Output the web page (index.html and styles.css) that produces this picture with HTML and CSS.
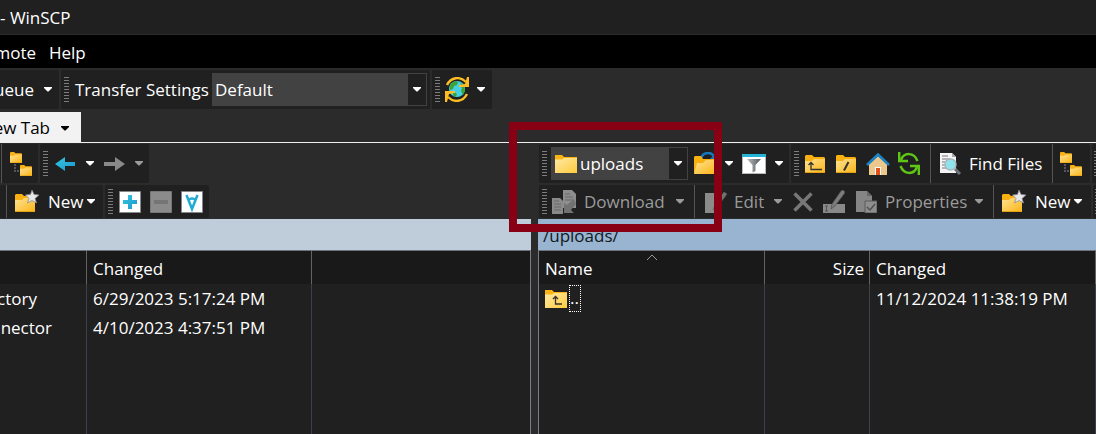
FILE: index.html
```html
<!DOCTYPE html>
<html lang="en">
<head>
<meta charset="utf-8">
<title>WinSCP</title>
<link rel="stylesheet" href="styles.css">
</head>
<body>
<svg class="defs" width="0" height="0" aria-hidden="true">
  <defs>
    <linearGradient id="gold" x1="0" y1="0" x2="1" y2="1"><stop offset="0" stop-color="#ffe394"/><stop offset="1" stop-color="#fbb415"/></linearGradient>
    <linearGradient id="pale" x1="0" y1="0" x2="1" y2="1"><stop offset="0" stop-color="#ffe9a6"/><stop offset="1" stop-color="#ffcb3c"/></linearGradient>
    <linearGradient id="cyan" x1="0" y1="0" x2="1" y2="1"><stop offset="0" stop-color="#35c9e0"/><stop offset="1" stop-color="#1b93cf"/></linearGradient>
    <linearGradient id="steel"><stop offset="0" stop-color="#b9bdc2"/><stop offset="1" stop-color="#53575c"/></linearGradient>
    <symbol id="folder" viewBox="0 0 22 18"><path d="M0 0h7l2 2h13v16H0z" fill="#fbb414"/><path d="M0 4.500h7l2-1.500h13v15H0z" fill="url(#pale)"/></symbol>
    <symbol id="folder-s" viewBox="0 0 20 18"><path d="M0 1l1-1h6l2 2h10l1 1v15H0z" fill="#f9b112"/><path d="M0 6h7l2-2h11v14H0z" fill="url(#gold)"/><path d="M0 17h20v1H0z" fill="#e3a214"/></symbol>
    <symbol id="caret" viewBox="0 0 8 5"><path d="M0 0h8v1L4.500 4.500h-1L0 1z" fill="currentColor"/></symbol>
    <symbol id="tree" viewBox="0 0 22 24"><use href="#folder-s" width="12" height="11"/><use href="#folder-s" x="10" y="13" width="12" height="11"/><path d="M4 12h2v2H4zm0 3h2v2H4zm0 3h2v2H4zm3 0h2v2H7z" fill="#55555a"/></symbol>
    <symbol id="starfolder" viewBox="0 0 24 23"><use href="#folder-s" y="4" width="20" height="18"/><path d="M17 0l2 4.500 5 .5-4 3.500 1.500 4.500-4.500-2.500-4.500 2.500L14 8.500 10.500 5l5-.5z" fill="#e8e8ea" stroke="#8d8d92" stroke-width=".8"/></symbol>
    <symbol id="upfolder" viewBox="0 0 20 18"><use href="#folder-s" width="20" height="18"/><path d="M3.500 10L6 7.500 8.500 10M6 7.500v7h11" fill="none" stroke="#33322c" stroke-width="1.300"/></symbol>
  </defs>
</svg>
<div class="app">
  <header class="title">- WinSCP</header>
  <nav class="menu"><a href="#remote">mote</a><a href="#help">Help</a></nav>
  <div class="top-tools">
    <div class="band band-queue"><button>ueue</button><button aria-label="Queue options"><svg class="caret"><use href="#caret"/></svg></button></div>
    <div class="band band-transfer"><i class="grip"></i><label for="transfer">Transfer Settings</label>
      <div class="combo"><select id="transfer"><option>Default</option></select><span class="drop"><svg class="caret"><use href="#caret"/></svg></span></div></div>
    <div class="band band-sync"><i class="grip"></i>
      <button aria-label="Synchronize"><svg width="24" height="25" viewBox="0 0 24 25"><circle cx="12" cy="12" r="8" fill="#45cfe6"/><path d="M6 7l4-3 3 1-1 3-3 1-1 3-3 1c-1-2 0-4 1-6zm10-1l3 3 1 5-2 4-2-4 1-3-2-2zM8 15l3 1 1 2-2 2-2-2z" fill="#3ca334"/><path d="M2 8C6 0 15-1 21 5" fill="none" stroke="#fdbd23" stroke-width="2.400"/><path d="M24 0v10H14V8l6-1 2-7z" fill="#fdbd23"/><path d="M22 17C18 25 9 26 3 20" fill="none" stroke="#fdbd23" stroke-width="2.400"/><path d="M0 25V14h10v2l-6 1-2 8z" fill="#fdbd23"/></svg></button>
      <button aria-label="Synchronize options"><svg class="caret"><use href="#caret"/></svg></button></div>
  </div>
  <div class="tabs"><button class="tab">ew Tab<svg class="caret"><use href="#caret"/></svg></button></div>
  <main class="panes">
    <section class="pane local">
      <div class="bands">
        <div class="band l1a"><i class="sep"></i><button aria-label="Directory tree"><svg width="22" height="24"><use href="#tree"/></svg></button></div>
        <div class="band l1b"><i class="grip"></i>
          <button aria-label="Back"><svg width="20" height="14" viewBox="0 0 20 14"><path d="M0 7l10-7v5h10v4H10v5z" fill="url(#cyan)"/></svg></button>
          <button aria-label="Back history"><svg class="caret"><use href="#caret"/></svg></button>
          <button class="off" aria-label="Forward"><svg width="21" height="14" viewBox="0 0 21 14"><path d="M21 7L11 0v5H0v4h11v5z" fill="#8a8a8a"/></svg></button>
          <button class="off" aria-label="Forward history"><svg class="caret"><use href="#caret"/></svg></button></div>
      </div>
      <div class="bands second">
        <div class="band l2a"><i class="sep"></i><button aria-label="New item"><svg width="24" height="23"><use href="#starfolder"/></svg></button><button>New</button><button aria-label="New options"><svg class="caret"><use href="#caret"/></svg></button></div>
        <div class="band l2b"><i class="grip"></i>
          <button aria-label="Select"><svg width="22" height="22" viewBox="0 0 22 22"><path d="M.5.5h21v21H.5z" fill="#fff" stroke="#85888c"/><path d="M9 4h4v5h5v4h-5v5H9v-5H4V9h5z" fill="url(#cyan)"/></svg></button>
          <button aria-label="Unselect"><svg width="22" height="22" viewBox="0 0 22 22"><path d="M.5.5h21v21H.5z" fill="#8b8b8b" stroke="#777"/><path d="M4 9h14v4H4z" fill="#757575"/></svg></button>
          <button aria-label="Select all"><svg width="22" height="22" viewBox="0 0 22 22"><path d="M.5.5h21v21H.5z" fill="#fff" stroke="#85888c"/><path d="M5.500 4L11 18l5.500-14M7.500 9c2-2 5-2 7 0" fill="none" stroke="#25acd4" stroke-width="2.600"/></svg></button></div>
      </div>
      <div class="path"></div>
      <div class="files"><table>
        <colgroup><col class="c-ext"><col class="c-date"><col></colgroup>
        <thead><tr><th></th><th>Changed</th><th></th></tr></thead>
        <tbody><tr><td><span class="tail tail-s">ctory</span></td><td>6/29/2023 5:17:24 PM</td><td></td></tr><tr><td><span class="tail">nnector</span></td><td>4/10/2023 4:37:51 PM</td><td></td></tr><tr class="rest"><td></td><td></td><td></td></tr></tbody>
      </table></div>
    </section>
    <section class="pane remote">
      <div class="bands">
        <div class="band r1a"><i class="grip"></i>
          <div class="combo folder-combo"><svg class="lead" width="22" height="18"><use href="#folder"/></svg><select aria-label="Directory"><option>uploads</option></select><span class="drop"><svg class="caret"><use href="#caret"/></svg></span></div>
          <button aria-label="Open directory"><svg width="24" height="24" viewBox="0 0 24 24"><path d="M7 6c3-7 11-6 13-1" fill="none" stroke="#1679bf" stroke-width="2.500"/><path d="M22 1v8h-8z" fill="#1679bf"/><path d="M0 5l1-1h6l2 3h12v4L0 21z" fill="#f9b112"/><path d="M0 22L3 11h6l3-3h10l-2 14z" fill="url(#gold)"/></svg></button>
          <button aria-label="Open options"><svg class="caret"><use href="#caret"/></svg></button>
          <button aria-label="Filter"><svg width="24" height="20" viewBox="0 0 24 20"><path d="M0 0h24v20H0z" fill="#fff"/><path d="M0 0h24v3H0z" fill="#25b2d7"/><path d="M.5 3v16.500h23V3" fill="none" stroke="#9a9a9a" stroke-width=".7"/><path d="M5 5h14l-5.500 6v6l-3 1.500V11z" fill="url(#steel)"/></svg></button>
          <button aria-label="Filter options"><svg class="caret"><use href="#caret"/></svg></button></div>
        <div class="band r1b"><i class="grip"></i>
          <button aria-label="Parent directory"><svg width="20" height="18"><use href="#upfolder"/></svg></button>
          <button aria-label="Root directory"><svg width="20" height="18" viewBox="0 0 20 18"><use href="#folder-s" width="20" height="18"/><path d="M12.500 7L8 15.500" stroke="#33322c" stroke-width="2"/></svg></button>
          <button aria-label="Home directory"><svg width="24" height="22" viewBox="0 0 24 22"><path d="M3 11l9-8 9 8v11H3z" fill="#ecc88c"/><path d="M1 12L12 1.500 23 12" fill="none" stroke="#1c83c7" stroke-width="2.600"/><path d="M9 14h6v8H9z" fill="#fff"/><path d="M10 15h4v7h-4z" fill="#e4501c"/></svg></button>
          <button aria-label="Refresh"><svg width="22" height="23" viewBox="0 0 22 23"><path d="M3 8C6 0 16 0 19.500 9M19 15C16 23 6 23 2.500 14" fill="none" stroke="#5fc616" stroke-width="2.500"/><path d="M1.200 0v9H10M20.800 23v-9H12" fill="none" stroke="#5fc616" stroke-width="2.400"/></svg></button>
          <i class="sep"></i>
          <button aria-label="Find"><svg width="22" height="22" viewBox="0 0 22 22"><path d="M0 0h12l4 4v16H0z" fill="#f4f4f4"/><path d="M12 0v4h4" fill="#aaa"/><path d="M2 3h6M2 6h8M2 9h3M2 12h3M2 15h4" stroke="#777"/><path d="M15 16l5 5" stroke="#6b7278" stroke-width="3"/><circle cx="10.500" cy="11.500" r="5.500" fill="#8fe3ec" stroke="#a9b4b9" stroke-width="1.400"/></svg></button>
          <button>Find Files</button><i class="sep"></i>
          <button aria-label="Directory tree"><svg width="22" height="24"><use href="#tree"/></svg></button></div>
        <div class="band edge"><i class="grip"></i></div>
      </div>
      <div class="bands second">
        <div class="band r2a off"><i class="grip"></i>
          <button aria-label="Download item"><svg width="25" height="24" viewBox="0 0 25 24"><path d="M11 0h9l4 4v14H11z" fill="#8e8e8e"/><path d="M0 8h8l3 3v13H0z" fill="#8a8a8a"/><path d="M2 11h5M2 14h7M2 17h7M2 20h7M13 4h5M13 7h8M13 10h8" stroke="#686868"/><path d="M22 9l-7 6-3-2v10h10l-3-3 5-6z" fill="#727272"/></svg></button>
          <button>Download</button><button aria-label="Download options"><svg class="caret"><use href="#caret"/></svg></button><i class="sep"></i>
          <button aria-label="Edit item"><svg width="22" height="22" viewBox="0 0 22 22"><path d="M0 2h17v20H0z" fill="#8b8b8b"/><path d="M8 19l2-6L19 1l3 2-9 12z" fill="#747474" stroke="#606060" stroke-width=".6"/></svg></button>
          <button>Edit</button><button aria-label="Edit options"><svg class="caret"><use href="#caret"/></svg></button>
          <button aria-label="Delete"><svg width="20" height="20" viewBox="0 0 20 20"><path d="M1.500 1.500l17 17m0-17l-17 17" stroke="#777" stroke-width="3.600"/></svg></button>
          <button aria-label="Rename"><svg width="22" height="23" viewBox="0 0 22 23"><path d="M0 14h22v9H0z" fill="#898989"/><path d="M2 16h3M3.500 16v5M2 21h3" stroke="#555"/><path d="M8 19l1-5L18 1l2-1 2 2-1 2-9 12z" fill="#7c7c7c" stroke="#4f4f4f" stroke-width=".7"/></svg></button>
          <button aria-label="Item properties"><svg width="21" height="22" viewBox="0 0 21 22"><path d="M0 0h11l5 5v16H0z" fill="#858585"/><path d="M11 0v5h5" fill="#666"/><path d="M9 10h12v12H9z" fill="#8e8e8e" stroke="#5a5a5a"/><path d="M11 16l3 3 5-6" fill="none" stroke="#4f4f4f" stroke-width="1.500"/></svg></button>
          <button>Properties</button><button aria-label="Properties options"><svg class="caret"><use href="#caret"/></svg></button><i class="sep"></i>
          <button class="on" aria-label="New item"><svg width="24" height="23"><use href="#starfolder"/></svg></button><button class="on">New</button><button class="on" aria-label="New options"><svg class="caret"><use href="#caret"/></svg></button></div>
        <div class="band edge"><i class="grip"></i></div>
      </div>
      <div class="path">/uploads/</div>
      <div class="files"><table>
        <colgroup><col class="c-name"><col class="c-size"><col></colgroup>
        <thead><tr><th class="sorted">Name<svg class="sort" width="12" height="7" viewBox="0 0 12 7"><path d="M1 6l5-5 5 5" fill="none" stroke="#9a9a9a"/></svg></th><th class="num">Size</th><th>Changed</th></tr></thead>
        <tbody><tr><td class="parent"><svg width="22" height="18" viewBox="0 0 22 18"><use href="#folder" width="22" height="18"/><path d="M8 9l2.500-2.500L13 9m-2.500-2.500V14H17" fill="none" stroke="#33322c" stroke-width="1.300"/></svg><span class="focus">..</span></td><td></td><td>11/12/2024 11:38:19 PM</td></tr><tr class="rest"><td></td><td></td><td></td></tr></tbody>
      </table></div>
    </section>
  </main>
  <div class="marker"></div>
</div>
</body>
</html>
```
FILE: styles.css
```css
* { box-sizing: border-box; }
body { margin: 0; background: #2b2b2b; color: #fff; font: 17px/24px "Open Sans", "Noto Sans", sans-serif; }
button, select { font: inherit; color: inherit; background: none; border: 0; padding: 0; margin: 0; white-space: nowrap; text-align: left; }
svg { display: block; flex: none; }
.defs { position: absolute; }
.app { position: relative; display: flex; flex-direction: column; min-height: 100vh; overflow: hidden; }
.title { height: 35px; padding: 6px 0; background: #202020; border-bottom: 1px solid #2b2b2b; }
.menu { display: flex; gap: 13px; height: 33px; padding: 6px 0; background: #000; }
.menu a { color: inherit; text-decoration: none; }
.menu a:first-child { width: 36px; display: flex; justify-content: flex-end; }

.band { display: grid; align-items: center; height: 39px; background: #202020; border-radius: 2px; }
.band > button { display: flex; align-items: center; height: 100%; }
.grip { width: 5px; height: 25px; background: repeating-linear-gradient(#7c7c7c 0 1px, transparent 1px 3px); }
.sep { width: 1px; height: 100%; background: #545454; }
.caret { width: 8px; height: 5px; }
.off { color: #9b9b9b; }
.on { color: #fff; }

.top-tools { display: flex; gap: 2px; padding-top: 2px; height: 44px; }
.band-queue { grid-template-columns: 44px 15px; }
.band-queue > button:first-child { width: 34px; justify-content: flex-end; }
.band-transfer { grid-template-columns: 11px 137px 215px; padding: 0 3px; }
.band-sync { grid-template-columns: 10px 32px 15px; padding: 0 0 0 3px; }
.combo { position: relative; height: 33px; background: #424242; }
.combo select { appearance: none; width: 100%; height: 100%; padding-left: 3px; outline: 0; }
.folder-combo select { padding-left: 29px; }
.combo .lead { position: absolute; left: 4px; top: 8px; }
.drop { position: absolute; inset: 1px 1px 1px auto; width: 18px; display: grid; place-items: center; background: #202020; pointer-events: none; }

.tabs { height: 31px; border-bottom: 1px solid #f0f0f0; }
.tab { display: flex; align-items: center; justify-content: flex-end; gap: 11px; width: 81px; height: 30px; padding: 2px 12px 0 0; background: #f2f2f2; color: #000; }

.panes { flex: 1; display: grid; grid-template-columns: minmax(0, 531fr) minmax(0, 558fr); gap: 7px; }
.pane { display: flex; flex-direction: column; overflow: hidden; }
.bands { display: flex; gap: 2px; padding-top: 1px; height: 41px; }
.second { height: 35px; }
.second .band { height: 33px; }
.l1a { grid-template-columns: 9px 28px; padding-left: 1px; }
.l1b { grid-template-columns: 12px 31px 18px 31px 14px; padding-left: 3px; }
.l2a { grid-template-columns: 9px 33px 39px 16px; padding-left: 6px; }
.l2b { grid-template-columns: 11px 31px 31px 28px; padding-left: 3px; }
.remote .bands { padding-left: 1px; }
.r1a { grid-template-columns: 9px 143px 31px 17px 33px 14px; padding-left: 3px; }
.folder-combo { width: 137px; }
.r1b { grid-template-columns: 11px 31px 30px 32px 32px 10px 29px 83px 8px 30px; padding-left: 3px; }
.r2a { grid-template-columns: 10px 32px 92px 18px 11px 29px 40px 19px 30px 33px 29px 90px 18px 9px 33px 39px 17px; padding-left: 3px; }
.edge { flex: 1; padding-left: 2px; }

.path { height: 32px; padding: 5px 5px 3px; color: #101820; border-bottom: 1px solid #70747c; }
.local .path { background: #bfccda; }
.remote .path { background: #99b4d1; }
.files { flex: 1; display: flex; background: #202020; }
.local .files { border-right: 1px solid #7b7d85; }
.remote .files { border-left: 1px solid #7b7d85; }
table { flex: 1; border-collapse: separate; border-spacing: 0; table-layout: fixed; width: 100%; }
th { height: 33px; padding: 2px 0 0 6px; background: #191919; border-right: 1px solid #636363; font-weight: 400; text-align: left; }
td { height: 29px; padding: 0 0 0 6px; border-right: 1px solid #3b424b; white-space: nowrap; }
.local th:last-child, .local td:last-child { border-right: 0; }
.local td:first-child { padding-left: 0; }
.rest td { height: auto; }
.tail { display: flex; justify-content: flex-end; width: 52px; }
.tail-s { width: 37px; }
.c-ext { width: 87px; }
.c-date { width: 225px; }
.c-name { width: 226px; }
.c-size { width: 105px; }
.num { text-align: right; padding-right: 5px; }
.sorted { position: relative; }
.sort { position: absolute; left: 50%; top: 3px; margin-left: -6px; }
.parent { display: flex; align-items: center; gap: 2px; }
.focus { width: 12px; height: 27px; border: 1px dotted #fff; }
.marker { position: absolute; left: 509px; top: 122px; width: 213px; height: 110px; border: 8px solid #870013; pointer-events: none; }
```
